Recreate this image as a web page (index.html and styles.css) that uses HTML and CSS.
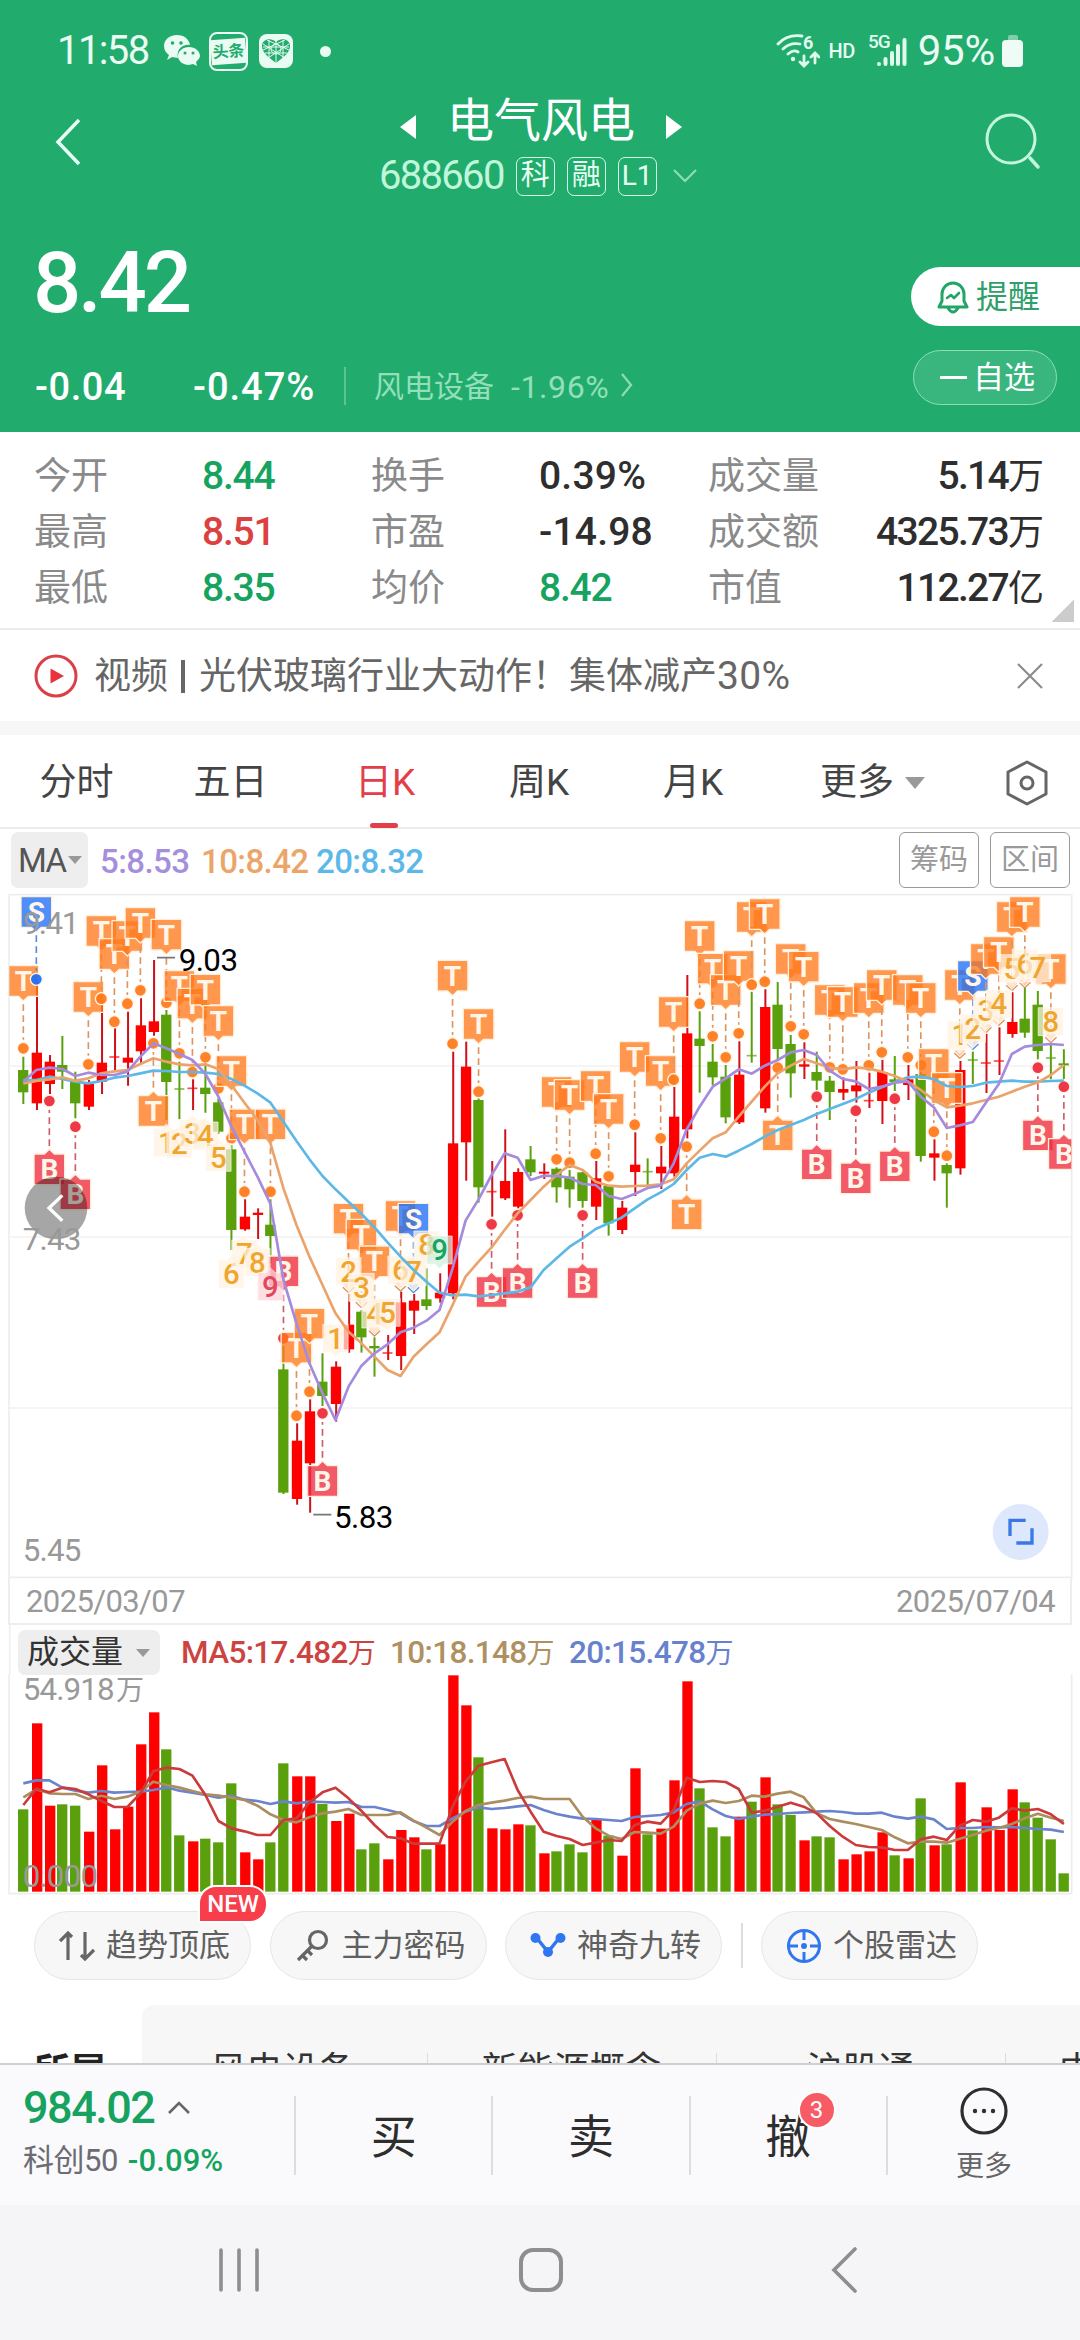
FILE: index.html
```html
<!DOCTYPE html>
<html lang="zh-CN">
<head>
<meta charset="utf-8">
<title>电气风电 688660</title>
<link rel="stylesheet" href="styles.css">
</head>
<body>
<header class="head">
  <div class="status">
    <span class="clock">11:58</span>
    <svg class="ic-wechat" width="36" height="32" viewBox="0 0 36 32"><path d="M13 0C5 0 0 5 0 11c0 4 2 7 5 9l-2 5 5-3 6 1c-2-9 5-14 12-13C25 4 20 0 13 0z" fill="#e9fbf2"/><path d="M25 12c-6 0-11 4-11 9s5 9 11 9l4-1 4 2-1-4c2-2 4-4 4-6 0-5-5-9-11-9z" fill="#e9fbf2"/><g fill="#21ac6e"><circle cx="8.500" cy="8" r="1.800"/><circle cx="17" cy="8" r="1.800"/><circle cx="21" cy="18" r="1.500"/><circle cx="29" cy="18" r="1.500"/></g></svg>
    <span class="toutiao"><b>头条</b></span>
    <svg class="ic-heart" width="34" height="34" viewBox="0 0 34 34"><rect width="34" height="34" rx="8" fill="#e9fbf2"/><path d="M17 29C8 22 3 18 3 12c0-7 9-9 14-4 5-5 14-3 14 4 0 6-5 10-14 17z" fill="#21ac6e"/><g fill="none" stroke="#e9fbf2" stroke-width="1"><path d="M4 10l22 14M8 6l22 10M30 10L9 24M26 6L4 16M17 7v22M4 13h26M6 19h22M10 6v18M24 6v18"/><circle cx="17" cy="15" r="5"/></g></svg>
    <i class="dot"></i>
    <span class="grow"></span>
    <svg width="44" height="36" viewBox="0 0 44 36"><g fill="none" stroke="#e0fbee" stroke-width="2.800" stroke-linecap="round"><path d="M2 11Q11 1 26 3M7 16Q14 9 24 11M12 21Q17 16 22 19"/><path d="M28 23v9M24 29l4 4 4-4M39 30v-9M35 24l4-4 4 4"/></g><circle cx="17" cy="26" r="2.200" fill="#e0fbee"/><text x="27" y="16" class="wifi6">6</text></svg>
    <span class="hd">HD</span>
    <svg width="39" height="34" viewBox="0 0 39 34"><text x="0" y="14" class="g5">5G</text><g fill="#e0fbee"><rect x="9" y="28" width="4" height="4" rx="2"/><rect x="15.500" y="23" width="4" height="9" rx="2"/><rect x="22" y="17" width="4" height="15" rx="2"/><rect x="28" y="10" width="4" height="22" rx="2"/><rect x="34.500" y="4" width="4" height="28" rx="2"/></g></svg>
    <span class="pct">95%</span>
    <svg width="22" height="32" viewBox="0 0 22 32"><rect x="6" y="0" width="10" height="8" rx="2" fill="#7fd0a9"/><rect y="5" width="21" height="27" rx="4" fill="#effbf5"/></svg>
  </div>
  <div class="titlebar">
    <svg class="back" width="28" height="50" viewBox="0 0 28 50"><path d="M25 3L4 25l21 22" fill="none" stroke="#e8fff4" stroke-width="3.500"/></svg>
    <div class="mid">
      <div class="name"><svg width="18" height="26" viewBox="0 0 18 26"><path d="M17 1v24L1 13z" fill="#fff"/></svg><span>电气风电</span><svg width="18" height="26" viewBox="0 0 18 26"><path d="M1 1v24l16-12z" fill="#fff"/></svg></div>
      <div class="code"><span class="num">688660</span><b class="tag">科</b><b class="tag">融</b><b class="tag l1">L1</b><svg width="24" height="14" viewBox="0 0 24 14"><path d="M1 1l11 11L23 1" fill="none" stroke="#8fdcb7" stroke-width="2.200"/></svg></div>
    </div>
    <svg class="search" width="56" height="58" viewBox="0 0 56 58"><circle cx="26" cy="26" r="24" fill="none" stroke="#c4f5dd" stroke-width="3"/><path d="M45 45l8 9" stroke="#c4f5dd" stroke-width="3.500" stroke-linecap="round"/></svg>
  </div>
  <div class="pricerow">
    <span class="price">8.42</span>
    <span class="remind"><svg width="32" height="34" viewBox="0 0 32 34"><g fill="none" stroke="#23a468" stroke-width="3" stroke-linejoin="round" stroke-linecap="round"><path d="M2 27l3-6v-7a11 11 0 0 1 22 0v7l3 6zM11 28q5 8 10 0"/><path d="M10 18l4-3 3 3 5-5" stroke-width="2.600"/></g></svg>提醒</span>
  </div>
  <div class="chgrow">
    <span class="c1">-0.04</span><span class="c2">-0.47%</span><i></i>
    <span class="ind">风电设备</span><span class="indn">-1.96%</span>
    <svg width="14" height="26" viewBox="0 0 14 26"><path d="M2 2l9 11-9 11" fill="none" stroke="#8fdcb7" stroke-width="2.200"/></svg>
    <span class="fav"><i></i>自选</span>
  </div>
</header>

<section class="stats">
  <span>今开</span><b class="g">8.44</b><span>换手</span><b class="wide">0.39%</b><span>成交量</span><b class="r">5.14<em>万</em></b>
  <span>最高</span><b class="red">8.51</b><span>市盈</span><b class="wide">-14.98</b><span>成交额</span><b class="r">4325.73<em>万</em></b>
  <span>最低</span><b class="g">8.35</b><span>均价</span><b class="g">8.42</b><span>市值</span><b class="r">112.27<em>亿</em></b>
  <i class="corner"></i>
</section>

<section class="news">
  <svg width="44" height="44" viewBox="0 0 44 44"><circle cx="22" cy="22" r="20" fill="none" stroke="#dd3f49" stroke-width="3"/><path d="M16.500 14.500v15L30 22z" fill="#e8323c"/></svg>
  <p>视频<i></i>光伏玻璃行业大动作！集体减产<span>30%</span></p>
  <svg width="26" height="26" viewBox="0 0 26 26"><path d="M1 1l24 24M25 1L1 25" stroke="#8c8c8c" stroke-width="2.200"/></svg>
</section>

<nav class="tabs">
  <span>分时</span><span>五日</span><span class="on">日K</span><span>周K</span><span>月K</span><span>更多<i class="tri"></i></span>
  <svg width="44" height="46" viewBox="0 0 44 46"><g fill="none" stroke="#666" stroke-width="3" stroke-linejoin="round"><path d="M22 2l19 10v22L22 44 3 34V12z"/><circle cx="22" cy="23" r="6"/></g></svg>
</nav>

<section class="marow">
  <span class="ma">MA<i class="tri"></i></span>
  <span class="m5">5:8.53</span><span class="m10">10:8.42</span><span class="m20">20:8.32</span>
  <span class="btn">筹码</span><span class="btn">区间</span>
</section>

<section class="chart">
  <svg id="price" width="1080" height="688" viewBox="0 33 3240 2064"></svg>
  <div class="dates"><span>2025/03/07</span><span>2025/07/04</span></div>
  <div class="volrow"><span class="vol">成交量<i class="tri"></i></span><span class="v5">MA5:17.482<em>万</em></span><span class="v10">10:18.148<em>万</em></span><span class="v20">20:15.478<em>万</em></span></div>
  <svg id="volume" width="1080" height="221" viewBox="0 222 3240 663"></svg>
</section>

<section class="tools">
  <span class="pill"><svg width="36" height="34" viewBox="0 0 36 34"><g fill="none" stroke="#666" stroke-width="3.200"><path d="M9 31V4M1 12l8-8 4 4M26 3v27M22 26l4 4 9-9"/></g></svg>趋势顶底<em class="new">NEW</em></span>
  <span class="pill"><svg width="36" height="34" viewBox="0 0 36 34"><g fill="none" stroke="#666" stroke-width="3.200"><circle cx="23" cy="11" r="8.500"/><path d="M17 17L3 31M7 26l5 5M12 21l5 5"/></g></svg>主力密码</span>
  <span class="pill"><svg width="36" height="34" viewBox="0 0 36 34"><path d="M6 8l12 15L30 8" fill="none" stroke="#2f76f0" stroke-width="3.500"/><g fill="#2f76f0"><circle cx="5.500" cy="9" r="5"/><circle cx="30.500" cy="9" r="5"/><circle cx="18" cy="23" r="5"/></g></svg>神奇九转</span>
  <i class="bar"></i>
  <span class="pill"><svg width="36" height="36" viewBox="0 0 36 36"><g fill="none" stroke="#2f76f0" stroke-width="3"><circle cx="18" cy="18" r="15.500"/><path d="M18 2v10M18 24v10M2 18h10M24 18h10"/></g><circle cx="18" cy="18" r="3" fill="#2f76f0"/></svg>个股雷达</span>
</section>

<section class="concept">
  <b>所属</b>
  <div class="strip"><span>风电设备</span><span>新能源概念</span><span>沪股通</span><span>中</span></div>
</section>

<footer class="trade">
  <div class="index">
    <div class="i1">984.02<svg width="24" height="14" viewBox="0 0 24 14"><path d="M2 12L12 2l10 10" fill="none" stroke="#666" stroke-width="2.600"/></svg></div>
    <div class="i2">科创<span>50</span><b>-0.09%</b></div>
  </div>
  <span class="act">买</span><span class="act">卖</span><span class="act">撤<em>3</em></span>
  <div class="more"><svg width="48" height="48" viewBox="0 0 48 48"><circle cx="24" cy="24" r="22" fill="none" stroke="#2e2e2e" stroke-width="3.200"/><g fill="#2e2e2e"><circle cx="15" cy="24" r="2.200"/><circle cx="24" cy="24" r="2.200"/><circle cx="33" cy="24" r="2.200"/></g></svg><span>更多</span></div>
</footer>
<div class="sysnav">
  <svg width="42" height="44" viewBox="0 0 42 44"><path d="M3 2v40M21 2v40M39 2v40" stroke="#8e8e8e" stroke-width="3.600" stroke-linecap="round"/></svg>
  <svg width="46" height="46" viewBox="0 0 46 46"><rect x="3" y="3" width="40" height="40" rx="12" fill="none" stroke="#8e8e8e" stroke-width="4"/></svg>
  <svg width="28" height="48" viewBox="0 0 28 48"><path d="M25 3L4 24l21 21" fill="none" stroke="#8e8e8e" stroke-width="3.600" stroke-linecap="round"/></svg>
</div>
<script src="chart.js"></script>
</body>
</html>
```
FILE: styles.css
```css
* { box-sizing: border-box; }
body { margin: 0; width: 1080px; height: 2340px; overflow: hidden; background: #fff; font-family: Roboto, "Noto Sans CJK SC", sans-serif; color: #333; line-height: 1; }
svg { display: block; flex: none; }
em, i { font-style: normal; }
b { font-weight: 500; }
span { white-space: nowrap; }

/* Header */
.head { height: 432px; background: #21ac6e; color: #fff; }
.status { height: 102px; padding: 0 56px 0 57px; display: flex; align-items: center; color: #e9fbf2; }
.clock { font-size: 40px; letter-spacing: -1.6px; width: 107px; }
.toutiao { width: 39px; height: 39px; margin-left: 9px; border: 2px solid #e9fbf2; border-radius: 8px; display: grid; place-items: center; }
.toutiao b { width: 35px; height: 25px; background: #e9fbf2; color: #21ac6e; font-size: 16px; font-weight: 700; line-height: 25px; text-align: center; transform: rotate(-4deg); white-space: nowrap; }
.ic-heart { margin-left: 11px; }
.dot { width: 11px; height: 11px; border-radius: 50%; background: #e9fbf2; margin-left: 27px; }
.grow { flex: 1; }
.wifi6 { font: 700 18px Roboto; fill: #e0fbee; }
.hd { font-size: 20px; font-weight: 500; margin: 0 13px 0 9px; letter-spacing: -.6px; }
.g5 { font: 500 19px Roboto; fill: #e0fbee; letter-spacing: -1px; }
.pct { font-size: 42px; letter-spacing: -.2px; margin: 0 7px 0 11px; }
.titlebar { height: 108px; display: flex; padding: 0 39px 0 54px; justify-content: space-between; }
.back { margin-top: 15px; }
.search { margin-top: 11px; }
.mid { width: 342px; margin-left: 15px; }
.name { height: 47px; margin-top: -5px; display: flex; align-items: center; justify-content: center; gap: 30px; font-size: 47px; }
.name svg { margin-top: 12px; }
.code { height: 40px; margin-top: 12px; display: flex; align-items: center; gap: 12px; padding-left: 9px; }
.code .num { font-size: 40px; font-weight: 400; letter-spacing: -1.7px; color: #c0f7db; }
.tag { width: 39px; height: 39px; border: 1.500px solid #d5f9e7; border-radius: 7px; font-size: 29px; font-weight: 400; line-height: 35px; text-align: center; color: #e6fff2; }
.l1 { font-size: 28px; }
.code svg { margin-left: 4px; }
.pricerow { height: 126px; display: flex; justify-content: space-between; align-items: center; margin-top: 10px; }
.price { font-size: 85px; font-weight: 500; letter-spacing: -3.200px; padding-left: 33px; margin-top: 1px; }
.remind { width: 169px; height: 59px; margin-top: 27px; background: #fff; border-radius: 30px 0 0 30px; color: #2f9f6b; font-size: 32px; display: flex; align-items: center; gap: 7px; padding-left: 26px; }
.chgrow { height: 58px; display: flex; align-items: center; margin-top: 2px; padding: 0 23px 0 35px; }
.chgrow > span { font-weight: 500; font-size: 38px; letter-spacing: .6px; padding-top: 19px; }
.c1 { width: 158px; }
.c2 { width: 151px; }
.chgrow > .c2 { letter-spacing: 1px; }
.chgrow > i { width: 2px; height: 38px; background: #5ac593; margin: 17px 28px 0 0; }
.chgrow > .ind, .chgrow > .indn { color: #93dfba; font-weight: 400; font-size: 30px; letter-spacing: 0; }
.chgrow > .indn { font-size: 32px; letter-spacing: .6px; margin: 0 11px 0 17px; }
.chgrow > svg { margin-top: 16px; }
.chgrow > .fav { margin: 0 0 0 auto; width: 144px; height: 55px; padding: 0 0 0 26px; border: 1.500px solid #8fdcb7; border-radius: 28px; background: #39b57e; font-size: 31px; font-weight: 400; letter-spacing: 0; display: flex; align-items: center; gap: 6px; }
.fav i { width: 27px; height: 3px; background: #fff; }

/* Quote figures */
.stats { position: relative; height: 198px; border-bottom: 2px solid #ececec; padding: 16px 36px 0 34px; display: grid; grid-template-columns: 168px 169px 168px 169px auto 1fr; grid-auto-rows: 56px; align-items: center; font-size: 37px; }
.stats span { color: #8a8a8a; }
.stats b { font-size: 39px; letter-spacing: -1.2px; color: #2e2e2e; }
.stats b.wide { letter-spacing: .2px; }
.stats em { font-size: 36px; font-weight: 400; letter-spacing: 0; }
.stats .g { color: #16a35f; }
.stats .red { color: #dd4040; }
.stats .r { text-align: right; letter-spacing: -1.7px; }
.corner { position: absolute; right: 6px; bottom: 6px; width: 22px; height: 22px; background: linear-gradient(135deg, transparent 50%, #ccc 50%); }

.news { height: 105px; border-bottom: 14px solid #f7f7f7; display: flex; align-items: center; padding: 1px 37px 0 34px; color: #666; }
.news p { flex: 1; margin: 0 0 0 16px; font-size: 37px; display: flex; align-items: center; }
.news p i { width: 4px; height: 33px; background: #666; margin: 0 14px 0 13px; }
.news p span { font-size: 39px; letter-spacing: .3px; }

.tabs { height: 94px; border-bottom: 2px solid #ececec; display: grid; grid-template-columns: 153px 155px 154px 154px 154px 198px 1fr; align-items: center; font-size: 37px; color: #444; text-align: center; padding-top: 3px; }
.tabs span { position: relative; }
.tabs .on { color: #e23f48; }
.tabs .on::after { content: ""; position: absolute; left: 50%; margin-left: -15px; bottom: -27px; width: 28px; height: 5px; border-radius: 3px; background: #e23f48; }
.tri { display: inline-block; border: 10px solid transparent; border-top: 12px solid #999; border-bottom: 0; margin-left: 11px; vertical-align: 6px; }
.tabs svg { margin-left: 37px; }
.tabs span:nth-child(6) { padding-left: 7px; }

/* Chart */
.marow { height: 62px; display: flex; align-items: center; padding: 0 10px 0 11px; font-size: 33px; letter-spacing: -.6px; font-weight: 500; }
.ma { width: 77px; height: 56px; background: #eee; border-radius: 7px; line-height: 57px; padding-left: 7px; color: #555; letter-spacing: -1.500px; margin-right: 12px; font-weight: 400; }
.ma .tri { border-width: 8px 7px 0; margin-left: 2px; vertical-align: 8px; }
.m5 { color: #a58fdc; width: 101px; padding-top: 3px; }
.m10 { color: #eba568; width: 115px; padding-top: 3px; }
.m20 { color: #5cb8e8; flex: 1; padding-top: 3px; }
.btn { width: 80px; height: 56px; border: 1.500px solid #999; border-radius: 6px; margin-left: 11px; font-size: 29px; font-weight: 400; letter-spacing: 0; line-height: 55px; text-align: center; color: #999; }

.dates { height: 46px; margin: 0 8px; border: 2px solid #eee; border-width: 0 2px 2px; padding: 0 15px 0 16px; display: flex; justify-content: space-between; align-items: center; font-size: 31px; letter-spacing: -.6px; color: #999; }
.volrow { height: 49px; padding-left: 18px; display: flex; align-items: center; font-size: 32px; box-shadow: inset 9px 0 #fff, inset 10.500px 0 #eee; }
.vol { width: 142px; height: 45px; border-radius: 7px; background: #eee; padding-left: 9px; line-height: 45px; margin: 6px 21px 0 0; color: #333; }
.vol .tri { margin-left: 13px; border-width: 8px 7px 0; }
.volrow em { font-size: 28px; font-weight: 400; }
.volrow > span + span { margin-right: 15px; font-size: 31.500px; font-weight: 500; letter-spacing: -.65px; padding-top: 6px; }
.v5 { color: #cd4340; }
.v10 { color: #ae9061; }
.v20 { color: #6881cf; }

.axis { font-size: 94px; fill: #999; }
.unit { font-size: 84px; }
.peak { font-size: 94px; fill: #000; }
.mk { font-size: 84px; font-weight: 700; fill: #fff6ea; text-anchor: middle; }
.nine { font-size: 88px; font-weight: 500; text-anchor: middle; }
.grid { fill: none; stroke: #ededed; stroke-width: 5; }
.line { fill: none; stroke-width: 8; stroke-linejoin: round; }

/* Tools and concepts */
.tools { height: 110px; padding: 16px 0 0 34px; display: flex; align-items: flex-start; gap: 18.500px; }
.pill { position: relative; width: 217px; height: 69px; border: 1px solid #e6e6e6; border-radius: 35px; background: #f7f7f7; display: flex; align-items: center; gap: 11px; padding-left: 24px; font-size: 31px; color: #606060; }
.new { position: absolute; left: 163px; top: -27px; width: 70px; height: 38px; background: #f83e4a; border: 2px solid #fff; border-radius: 18px 18px 18px 2px; color: #fff; font-size: 24px; font-weight: 500; line-height: 35px; text-align: center; }
.bar { width: 2px; height: 45px; background: #ddd; margin-top: 12px; }

.concept { height: 58px; overflow: hidden; padding-left: 34px; display: flex; font-size: 36px; color: #333; }
.concept b { font-weight: 700; width: 108px; flex: none; padding-top: 49px; color: #222; }
.strip { width: 1000px; height: 140px; flex: none; background: #f7f7f7; border-radius: 12px 0 0 0; padding-top: 48px; display: flex; }
.strip span { width: 286px; padding-right: 4px; text-align: center; border-right: 1px solid #ddd; height: 60px; margin-right: 3px; flex: none; }
.strip span:last-child { text-align: left; padding-left: 50px; border: 0; }

/* Trade bar and system navigation */
.trade { height: 142px; border-top: 2px solid #cfcfcf; background: #fafafc; display: flex; padding-top: 31px; }
.index { width: 294px; padding-left: 23px; margin-top: -11px; }
.i1 { font-size: 45px; font-weight: 500; letter-spacing: -1.500px; color: #16a35f; display: flex; align-items: center; gap: 13px; height: 45px; }
.i2 { font-size: 31px; margin-top: 15px; color: #6c6c74; display: flex; align-items: center; letter-spacing: -.5px; }
.i2 b { color: #16a35f; margin-left: 10px; letter-spacing: .1px; }
.act { position: relative; width: 197.300px; height: 79px; border-left: 2px solid #ddd; text-align: center; line-height: 83px; font-size: 46px; color: #2e2e2e; }
.act em { position: absolute; left: 107px; top: -5px; width: 38px; height: 38px; border-radius: 50%; border: 2px solid #fff; background: #f75c66; color: #fff; font-size: 24px; line-height: 34px; }
.more { flex: 1; height: 79px; border-left: 2px solid #ddd; display: flex; flex-direction: column; align-items: center; font-size: 28px; color: #666; }
.more svg { margin-top: -9px; }
.more span { margin-top: 18px; flex: none; }
.sysnav { height: 135px; background: #f5f5f7; display: grid; grid-template-columns: 300px 299px 1fr; align-items: center; padding: 0 0 5px 218px; }
.sysnav svg:last-child { margin-left: 13px; }
```
FILE: chart.js
```js
// Coordinates are in thirds of a CSS pixel. Each candle: colour, high, body top, body bottom, low.
const X = i => 70 + 39.02 * i;
const candles = `g530,570,637,672 r300,518,670,690 r525,545,612,642 g468,555,575,627 g575,605,670,715 r600,612,680,690 r375,548,605,642 r445,531,531,575 r395,533,548,617 r355,436,514,550
r240,424,456,467 g390,404,606,720 g545,627,627,718 r598,625,625,690 g555,623,642,698 g655,667,755,762 g795,808,1050,1110 r958,1010,1048,1052 r985,998,1005,1077 g958,1034,1068,1150
g1398,1468,1838,1842 r1630,1682,1857,1874 r1558,1594,1750,1898 g1420,1505,1548,1578 r1444,1460,1572,1625 r1242,1334,1408,1418 g1290,1295,1372,1418 g1372,1398,1405,1490 r1365,1419,1419,1440 r1235,1267,1428,1470
r1242,1262,1292,1362 g1165,1258,1278,1290 r1180,1238,1255,1268 r515,790,1240,1258 r485,560,787,902 g655,660,922,968 r843,935,935,1010 r748,903,955,960 r865,876,980,985 g798,838,877,888
r850,875,880,897 g862,866,922,968 g870,890,928,983 g875,877,963,983 r843,895,980,1020 g915,918,1030,1067 r963,983,1050,1062 r757,854,876,948 g835,875,875,915 r798,860,880,927
r620,710,880,890 r285,460,748,775 g394,476,498,638 g492,545,592,615 g555,590,712,730 r484,584,727,732 g335,527,527,548 r328,381,685,698 g306,374,507,555 g465,492,580,653
r487,553,560,597 g515,576,602,630 g588,602,636,720 r592,627,638,660 r543,616,634,668 r578,662,662,684 r540,576,663,732 g528,598,606,633 r555,598,615,660 g575,582,828,845
r778,820,833,902 g850,855,880,983 r543,570,865,884 g515,540,540,612 r462,549,549,639 r442,543,543,585 r337,426,462,473 g322,416,458,473 g333,374,513,538 g490,534,534,598 g508,550,553,597`
  .split(/\s+/).map(s => [s[0], ...s.slice(1).split(',').map(Number)]);
const ma5 = [605,570,563,567,588,578,585,585,575,530,490,505,522,540,582,650,740,815,890,972,1200,1330,1450,1540,1620,1520,1457,1420,1393,1357,1343,1322,1290,1165,1022,958,885,820,833,900,887,888,893,912,915,948,957,942,924,917,850,748,680,620,595,568,581,557,540,517,510,525,572,597,604,627,620,608,604,650,682,744,736,726,668,612,522,500,495,492,495];
const ma10 = [610,603,598,592,602,595,580,574,570,552,535,545,553,556,553,567,615,668,720,790,925,1035,1130,1215,1300,1355,1390,1430,1470,1488,1430,1393,1357,1275,1190,1145,1102,1050,1000,960,920,885,855,870,905,917,920,918,917,913,898,850,812,775,757,710,665,620,580,557,537,550,563,568,562,566,575,588,605,630,660,682,677,670,660,650,635,620,607,585,555];
const ma20 = [600,600,590,597,605,610,603,593,588,580,572,573,576,576,578,582,597,617,640,668,725,783,838,888,928,965,1002,1042,1087,1130,1170,1205,1238,1246,1244,1249,1245,1240,1235,1222,1170,1135,1100,1075,1047,1030,1013,985,958,937,912,870,833,822,830,812,792,770,750,735,720,702,687,672,657,638,622,607,592,590,597,618,621,618,608,605,602,605,605,603,602];
// Signal flags: letter, candle index, flag top, dot position.
const flags = `T0,257,505 S1,50,298 B2,822,663 B4,897,740 T5,305,553 T6,107,356 T7,176,425 T8,122,371 T9,83,331 T10,647,490 T11,118,368 T12,272,520 T13,325,576 T14,283,532 T15,377,625 T16,527,775 T17,687,935 T19,687,935 B20,1128,1375 T21,1357,1607 T22,1285,1535 B23,1757,1600 T25,970,1220 T26,1018,1265 T27,1098,1350 T29,962,1215 S30,970,1220 T33,241,491 T35,386,635 B36,1190,1033 B38,1163,1006 T41,590,838 T42,599,848 B43,1163,1006 T44,572,821 T45,641,889 T47,485,734 T49,527,775 T50,350,599 T51,957,800 T52,122,371 T53,220,469 T54,284,532 T55,212,460 T56,65,314 T57,56,305 T58,720,563 T59,191,439 T60,214,463 B61,807,650 T62,314,562 T63,320,568 B64,849,692 T65,308,556 T66,269,517 B67,813,656 T68,284,532 T69,308,556 T70,506,755 T71,578,827 T72,269,517 S73,242,490 T74,191,440 T75,170,418 T76,65,314 T77,50,305 B78,720,563 T79,221,470 B80,776,620`
  .split(' ').map(s => [s[0], ...s.slice(1).split(',').map(Number)]);
// Nine-turn counters: candle index, digit, centre, direction of the pointer.
const nine = [[11,1,788,-1],[12,2,792,-1],[13,3,760,-1],[14,4,768,-1],[15,5,832,-1],[16,6,1182,-1],[17,7,1122,-1],[18,8,1147,-1],[19,9,1220,-1],
[24,1,1375,1],[25,2,1175,1],[26,3,1222,1],[27,4,1302,1],[28,5,1297,1],[29,6,1170,1],[30,7,1175,1],[31,8,1095,1],[32,9,1110,1],
[72,1,465,1],[73,2,445,1],[74,3,392,1],[75,4,372,1],[76,5,266,1],[77,6,250,1],[78,7,263,1],[79,8,425,1]];
const paled = new Set([25,26,27,29,30,72,73,74,75,76,77,79]);
const RED = '#fe0000', GREEN = '#5aa00c';
const tone = { T: ['#ff7a1c', '#dc9560'], B: ['#ee2c3c', '#cf5c68'], S: ['#1f70f8', '#5b8dd6'] };
const path = (a, c) => `<path class="line" stroke="${c}" d="M${a.map((y, i) => X(i).toFixed(1) + ' ' + y).join('L')}"/>`;

let s = '<clipPath id="c"><rect x="28" y="42" width="3186" height="2040"/></clipPath>';
s += '<path class="grid" d="M27 2060V44H3215V2097M27 2097V44"/><path class="grid" stroke-opacity=".8" d="M27 558H3215M27 1071H3215M27 1584H3215"/><path class="grid" d="M27 2092H3215"/>';
s += '<g clip-path="url(#c)">';
candles.forEach(([c, h, t, b, l], i) => {
  const col = c === 'r' ? RED : GREEN, x = X(i), w = c === 'r' ? 2 : 0;
  s += `<path d="M${x + w} ${h}V${l}" stroke="${c === 'r' ? '#d01018' : GREEN}" stroke-width="6"/>`;
  s += t === b ? `<path d="M${x - 15} ${t}h30" stroke="${col}" stroke-width="5" opacity=".7"/>`
    : `<rect x="${x - 16 + w}" y="${t}" width="31" height="${Math.max(b - t, 6)}" fill="${col}"/>`;
});
flags.forEach(([k, i, top, dot]) => {
  const x = X(i), up = dot > top, [f, d] = tone[k], e = up ? top + 92 : top;
  s += `<path d="M${x} ${up ? e + 24 : e - 24}V${up ? dot - 26 : dot + 26}" stroke="${d}" stroke-width="5" stroke-dasharray="20 13"/>`;
  s += paled.has(i)
    ? `<path d="M${x - 16} ${dot - 4}q8 -8 16 0q8 -8 16 0L${x} ${dot + 12}z" fill="${f}" opacity=".42"/><path d="M${x - 17} ${dot + 2}L${x} ${dot + 18}l17 -16" stroke="${d}" fill="none" stroke-width="4"/>`
    : `<circle cx="${x}" cy="${dot}" r="18" fill="${f}" fill-opacity=".94" stroke="#fff5e6" stroke-width="4"/>`;
  const l = x - 46, r = x + 46, b = top + 92;
  const o = up ? `M${l} ${top}H${r}V${b}H${x + 15}L${x} ${b + 14}L${x - 15} ${b}H${l}z` : `M${l} ${top}H${x - 15}L${x} ${top - 14}L${x + 15} ${top}H${r}V${b}H${l}z`;
  s += `<path d="${o}" fill="${f}" fill-opacity=".78" stroke="#fff0dd" stroke-width="4" stroke-linejoin="round"/><text class="mk" x="${x}" y="${top + 76}">${k}</text>`;
});
nine.forEach(([i, n, y, p]) => {
  const x = X(i), nineth = n === 9;
  const bg = nineth ? (p > 0 ? '#cfeedd' : '#ffd3da') : '#fff1df', fg = nineth ? (p > 0 ? '#15a663' : '#e2475c') : '#f0a52f';
  s += `<path d="M${x - 38} ${y - 42}${p < 0 ? `H${x - 14}L${x} ${y - 56}L${x + 14} ${y - 42}` : ''}H${x + 38}V${y + 42}${p > 0 ? `H${x + 14}L${x} ${y + 56}L${x - 14} ${y + 42}` : ''}H${x - 38}z" fill="${bg}" fill-opacity=".72" stroke="#fff" stroke-opacity=".6" stroke-width="3"/>`;
  s += `<text class="nine" x="${x}" y="${y + 31}" fill="${fg}">${n}</text>`;
});
s += path(ma20, '#5eb8e6') + path(ma10, '#eba36c') + path(ma5, '#a58bdd') + '</g>';
s += '<circle cx="168" cy="984" r="94" fill="#000" fill-opacity=".35"/><path d="M187 946L147 984L187 1022" fill="none" stroke="#fff" stroke-width="10"/>';
s += '<text class="axis" x="68" y="162" textLength="170">9.41</text><text class="axis" x="68" y="1110" textLength="176">7.43</text><text class="axis" x="68" y="2042" textLength="176">5.45</text>';
s += '<path d="M471 233h54M940 1904h54" stroke="#777" stroke-width="5"/><text class="peak" x="536" y="274" textLength="178">9.03</text><text class="peak" x="1002" y="1945" textLength="178">5.83</text>';
s += '<circle cx="3062" cy="1956" r="84" fill="#dee8fd"/><path d="M3030 1968V1921H3077M3096 1945V1989H3049" fill="none" stroke="#3a78e8" stroke-width="10"/>';
document.getElementById('price').innerHTML = s;

const vol = [628,370,617,613,617,695,496,688,620,433,337,448,706,724,716,727,550,757,778,727,490,529,529,612,663,641,748,730,778,690,712,748,733,226,316,472,685,688,673,676,760,754,733,757,660,707,767,505,703,686,541,244,565,682,709,650,605,532,613,645,721,709,712,778,763,754,697,766,775,595,736,733,547,691,622,690,568,607,653,718,820];
const v5 = [615,566,577,563,567,583,603,621,621,580,513,503,507,527,585,663,685,694,705,705,660,655,607,577,563,595,633,675,711,715,731,731,731,620,545,497,487,477,570,635,695,708,717,735,728,720,723,675,665,671,630,533,546,543,546,567,638,632,620,608,620,640,678,710,735,741,742,750,750,718,710,720,677,660,665,653,625,632,627,643,672];
const v10 = [592,568,580,582,582,597,587,597,590,575,545,555,563,573,583,587,593,600,617,643,660,667,652,640,635,627,645,645,645,637,662,683,705,665,633,615,608,602,594,590,597,597,597,650,685,707,717,696,698,701,680,632,611,602,609,603,587,590,581,575,592,640,657,665,672,681,690,712,730,725,725,728,716,705,692,684,672,655,641,653,663];
const v20 = [550,541,541,563,572,578,573,578,576,575,570,562,572,578,585,593,587,599,603,612,604,610,605,606,608,606,621,621,630,640,663,678,678,655,635,622,627,624,619,615,630,642,650,656,657,660,663,651,648,645,637,612,604,628,648,657,650,644,642,639,637,635,633,636,641,641,638,650,656,650,658,687,684,684,681,682,681,684,687,689,696];
let v = '<path class="grid" d="M27 222V881H3215V222"/>';
vol.forEach((y, i) => { v += `<rect x="${X(i) - (candles[i][0] === 'r' ? 13 : 16)}" y="${y}" width="31" height="${875 - y}" fill="${candles[i][0] === 'r' ? RED : GREEN}"/>`; });
v += path(v20, '#6b82cc') + path(v10, '#ab8d60') + path(v5, '#cb3b3b');
v += '<text class="axis" x="68" y="300" textLength="276">54.918</text><text class="axis unit" x="348" y="300">万</text><text class="axis" x="68" y="860" textLength="226">0.000</text>';
document.getElementById('volume').innerHTML = v;
```
